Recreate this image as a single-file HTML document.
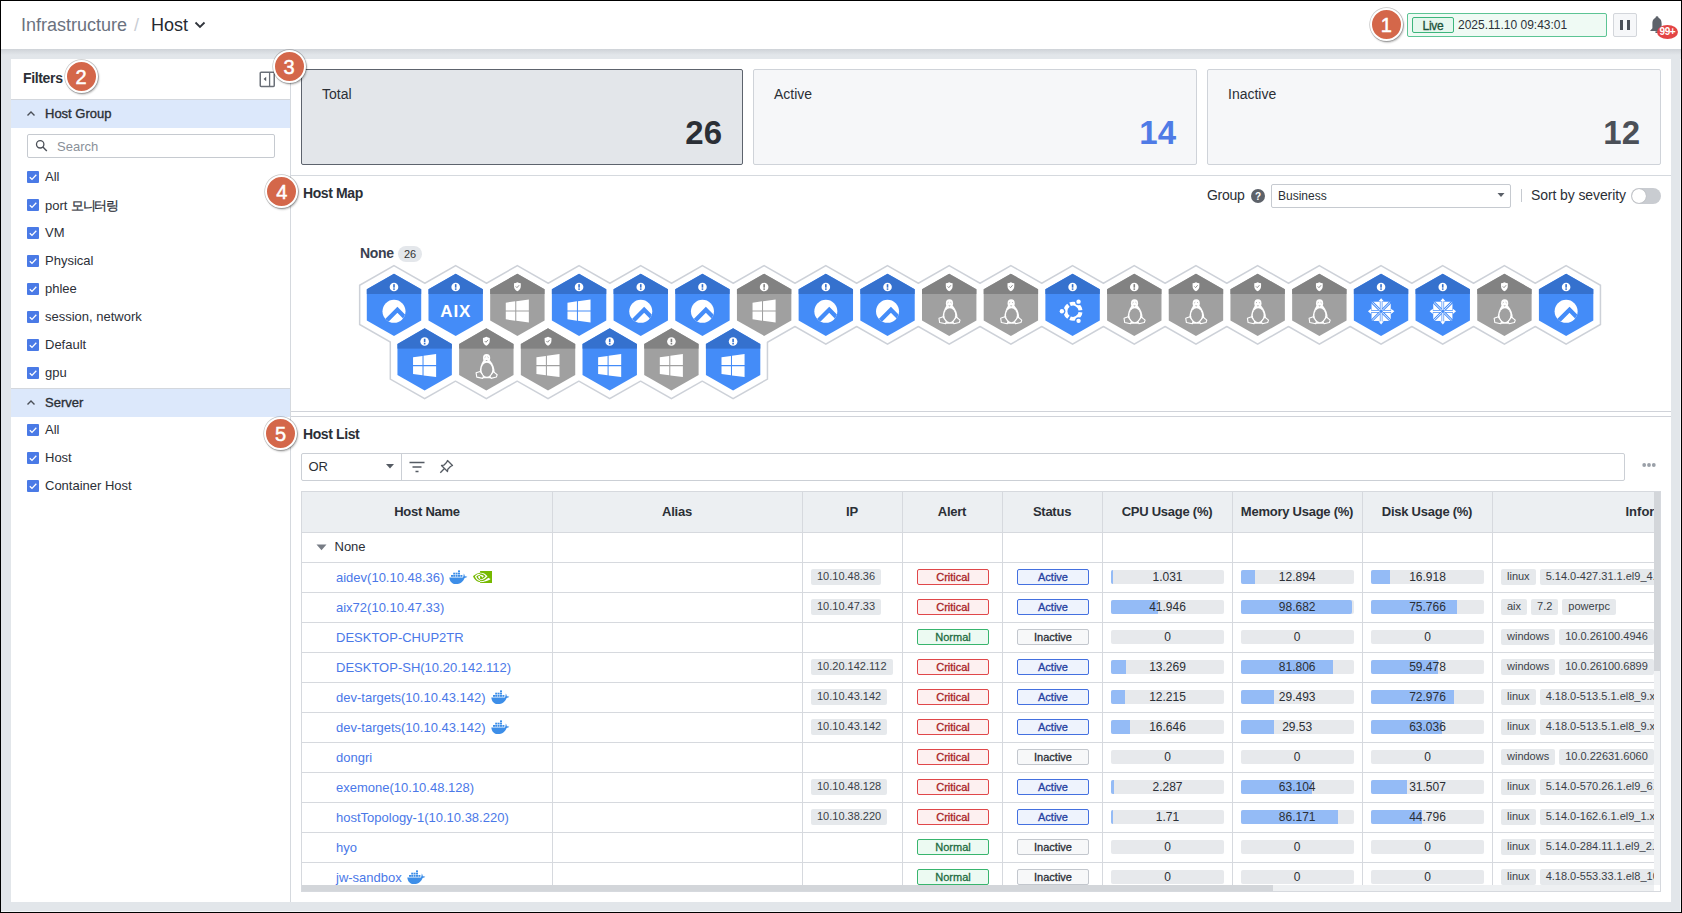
<!DOCTYPE html><html><head><meta charset="utf-8"><style>
*{box-sizing:border-box;margin:0;padding:0}
html,body{width:1682px;height:913px;overflow:hidden;background:#000;font-family:"Liberation Sans",sans-serif;color:#2b2f36}
.a{position:absolute}
.t{position:absolute;white-space:nowrap;line-height:1}
.cb{position:absolute;width:12px;height:12px;background:#4a7ae6;border-radius:1px}
.cb svg{position:absolute;left:0;top:0}
.lbl{position:absolute;left:45px;font-size:13px;color:#2c3038;white-space:nowrap;line-height:1}
.ann{position:absolute;width:33px;height:33px;border-radius:50%;background:#d4674a;border:2px solid #fff;box-shadow:0 0 0 0.7px rgba(0,0,0,.22),1px 1.5px 2px rgba(0,0,0,.3);color:#fff;font-size:20px;text-align:center;line-height:31px;z-index:50;-webkit-text-stroke:0.5px #fff}
.card{position:absolute;top:69px;height:96px;border:1px solid #cfd3d9;border-radius:2px;background:#f6f7f9}
.card .cl{position:absolute;left:20px;top:17.3px;font-size:14px;color:#2b2f36;line-height:1}
.card .cv{position:absolute;right:20px;top:45.5px;font-size:33px;font-weight:bold;line-height:1}
</style></head><body>
<div class="a" style="left:1px;top:1px;width:1680px;height:911px;background:#e2e6ea"></div>
<div class="a" style="left:1680px;top:1px;width:1px;height:911px;background:#f3f6f8"></div>
<div class="a" style="left:1px;top:911px;width:1680px;height:1px;background:#f3f6f8"></div>
<div class="a" style="left:1px;top:49px;width:1680px;height:10px;background:linear-gradient(#cfd3d8,#e2e6ea 60%)"></div>
<div class="a" style="left:1px;top:1px;width:1680px;height:48px;background:#fff"></div>
<div class="t" style="left:21px;top:16px;font-size:18px;color:#6b7280">Infrastructure</div>
<div class="t" style="left:134px;top:16px;font-size:18px;color:#c9cdd4">/</div>
<div class="t" style="left:151px;top:16px;font-size:18px;color:#262a31">Host</div>
<svg class="a" style="left:194px;top:20px" width="12" height="10"><path d="M1.5 2.5 L6 7 L10.5 2.5" fill="none" stroke="#30343b" stroke-width="1.8"/></svg>
<div class="a" style="left:1407px;top:13px;width:200px;height:24px;border:1px solid #5cc494;background:#effaf4;border-radius:2px"></div>
<div class="a" style="left:1412px;top:17px;width:42px;height:16px;border:1px solid #3db57c;background:#e6f7ee;border-radius:2px"></div>
<div class="t" style="left:1412px;top:19.6px;width:42px;text-align:center;font-size:12px;color:#1d5238;letter-spacing:-0.3px;-webkit-text-stroke:0.3px #1d5238">Live</div>
<div class="t" style="left:1458px;top:19px;font-size:12px;color:#2d3139">2025.11.10 09:43:01</div>
<div class="a" style="left:1613px;top:13px;width:24px;height:24px;border:1px solid #d3d6db;background:#f6f7f9;border-radius:2px"></div>
<div class="a" style="left:1620px;top:20px;width:3px;height:10px;background:#4a4f57"></div>
<div class="a" style="left:1627px;top:20px;width:3px;height:10px;background:#4a4f57"></div>
<svg class="a" style="left:1645px;top:14px" width="24" height="20" viewBox="1645 14 24 20"><circle cx="1657" cy="17.6" r="1.4" fill="#5d626a"/><path d="M1657 17.8 C1653.6 17.8 1652.4 20.5 1652.4 23.5 L1652.4 28.2 L1650 30.9 L1664 30.9 L1661.6 28.2 L1661.6 23.5 C1661.6 20.5 1660.4 17.8 1657 17.8Z" fill="#5d626a"/><rect x="1655.2" y="31.2" width="3.6" height="1.8" rx="0.9" fill="#5d626a"/></svg>
<div class="a" style="left:1656.8px;top:24.8px;width:21.2px;height:14.2px;border-radius:50%;background:#e34545"></div>
<div class="t" style="left:1656.8px;top:26.6px;width:21.2px;text-align:center;font-size:10px;font-weight:bold;color:#fff;letter-spacing:-0.4px">99+</div>
<div class="a" style="left:11px;top:59px;width:1660px;height:843px;background:#fff"></div>
<div class="a" style="left:290px;top:59px;width:1px;height:843px;background:#d5d9de"></div>
<div class="ann" style="left:1369.7px;top:7.5px">1</div>
<div class="ann" style="left:64.5px;top:59.5px">2</div>
<div class="ann" style="left:272.5px;top:49.5px">3</div>
<div class="ann" style="left:265.2px;top:175.2px">4</div>
<div class="ann" style="left:264.0px;top:416.8px">5</div>
<div class="t" style="left:23px;top:71.3px;font-size:14px;font-weight:bold;color:#2b2f36;letter-spacing:-0.35px">Filters</div>
<svg class="a" style="left:258px;top:69.5px" width="18" height="18" viewBox="0 0 18 18"><rect x="2.25" y="2.2" width="14" height="14.2" rx="0.9" fill="none" stroke="#6b7079" stroke-width="1.5"/><line x1="11.6" y1="2.5" x2="11.6" y2="16" stroke="#6b7079" stroke-width="1.3"/><path d="M8.2 6.8 L5.6 9 L8.2 11.2Z" fill="#555a62"/></svg>
<div class="a" style="left:11px;top:99px;width:279px;height:1px;background:#d3d7dd"></div>
<div class="a" style="left:11px;top:100px;width:279px;height:28px;background:#dce8fb"></div>
<svg class="a" style="left:26px;top:110px" width="10" height="7"><path d="M1.5 5.5 L5 2 L8.5 5.5" fill="none" stroke="#4a4f57" stroke-width="1.4"/></svg>
<div class="t" style="left:45px;top:107px;font-size:13px;color:#2b2f36;-webkit-text-stroke:0.35px #2b2f36">Host Group</div>
<div class="a" style="left:27px;top:134px;width:248px;height:24px;border:1px solid #c6cad0;border-radius:2px"></div>
<svg class="a" style="left:33px;top:137px" width="16" height="16" viewBox="33 137 16 16"><circle cx="40.2" cy="144.3" r="3.7" fill="none" stroke="#4b5058" stroke-width="1.3"/><line x1="42.9" y1="147" x2="46.8" y2="150.9" stroke="#4b5058" stroke-width="1.4"/></svg>
<div class="t" style="left:57px;top:140px;font-size:13px;color:#8a9099">Search</div>
<div class="cb" style="left:27px;top:171.0px"><svg width="12" height="12"><path d="M2.8 6.2 L5 8.4 L9.3 3.8" fill="none" stroke="#fff" stroke-width="1.3"/></svg></div>
<div class="lbl" style="top:170.0px">All</div>
<div class="cb" style="left:27px;top:199.0px"><svg width="12" height="12"><path d="M2.8 6.2 L5 8.4 L9.3 3.8" fill="none" stroke="#fff" stroke-width="1.3"/></svg></div>
<div class="lbl" style="top:199.0px">port <span style="letter-spacing:-1.4px;-webkit-text-stroke:0.25px #2c3038">모니터링</span></div>
<div class="cb" style="left:27px;top:227.0px"><svg width="12" height="12"><path d="M2.8 6.2 L5 8.4 L9.3 3.8" fill="none" stroke="#fff" stroke-width="1.3"/></svg></div>
<div class="lbl" style="top:226.0px">VM</div>
<div class="cb" style="left:27px;top:255.0px"><svg width="12" height="12"><path d="M2.8 6.2 L5 8.4 L9.3 3.8" fill="none" stroke="#fff" stroke-width="1.3"/></svg></div>
<div class="lbl" style="top:254.0px">Physical</div>
<div class="cb" style="left:27px;top:283.0px"><svg width="12" height="12"><path d="M2.8 6.2 L5 8.4 L9.3 3.8" fill="none" stroke="#fff" stroke-width="1.3"/></svg></div>
<div class="lbl" style="top:282.0px">phlee</div>
<div class="cb" style="left:27px;top:311.0px"><svg width="12" height="12"><path d="M2.8 6.2 L5 8.4 L9.3 3.8" fill="none" stroke="#fff" stroke-width="1.3"/></svg></div>
<div class="lbl" style="top:310.0px">session, network</div>
<div class="cb" style="left:27px;top:339.0px"><svg width="12" height="12"><path d="M2.8 6.2 L5 8.4 L9.3 3.8" fill="none" stroke="#fff" stroke-width="1.3"/></svg></div>
<div class="lbl" style="top:338.0px">Default</div>
<div class="cb" style="left:27px;top:367.0px"><svg width="12" height="12"><path d="M2.8 6.2 L5 8.4 L9.3 3.8" fill="none" stroke="#fff" stroke-width="1.3"/></svg></div>
<div class="lbl" style="top:366.0px">gpu</div>
<div class="a" style="left:11px;top:388px;width:279px;height:1px;background:#d3d7dd"></div>
<div class="a" style="left:11px;top:389px;width:279px;height:28px;background:#dce8fb"></div>
<svg class="a" style="left:26px;top:399px" width="10" height="7"><path d="M1.5 5.5 L5 2 L8.5 5.5" fill="none" stroke="#4a4f57" stroke-width="1.4"/></svg>
<div class="t" style="left:45px;top:396px;font-size:13px;color:#2b2f36;-webkit-text-stroke:0.35px #2b2f36">Server</div>
<div class="cb" style="left:27px;top:424.0px"><svg width="12" height="12"><path d="M2.8 6.2 L5 8.4 L9.3 3.8" fill="none" stroke="#fff" stroke-width="1.3"/></svg></div>
<div class="lbl" style="top:423.0px">All</div>
<div class="cb" style="left:27px;top:452.0px"><svg width="12" height="12"><path d="M2.8 6.2 L5 8.4 L9.3 3.8" fill="none" stroke="#fff" stroke-width="1.3"/></svg></div>
<div class="lbl" style="top:451.0px">Host</div>
<div class="cb" style="left:27px;top:480.0px"><svg width="12" height="12"><path d="M2.8 6.2 L5 8.4 L9.3 3.8" fill="none" stroke="#fff" stroke-width="1.3"/></svg></div>
<div class="lbl" style="top:479.0px">Container Host</div>
<div class="card" style="left:301px;width:442px;background:#e3e6ea;border-color:#5d636d"><div class="cl">Total</div><div class="cv" style="color:#2b2f36">26</div></div>
<div class="card" style="left:753px;width:444px;background:#f6f7f9;border-color:#cfd3d9"><div class="cl">Active</div><div class="cv" style="color:#4f7be6">14</div></div>
<div class="card" style="left:1207px;width:454px;background:#f6f7f9;border-color:#cfd3d9"><div class="cl">Inactive</div><div class="cv" style="color:#4b5058">12</div></div>
<div class="a" style="left:291px;top:175px;width:1380px;height:1px;background:#d5d9de"></div>
<div class="t" style="left:303px;top:185.7px;font-size:14px;font-weight:bold;color:#2b2f36;letter-spacing:-0.4px">Host Map</div>
<div class="t" style="left:1207px;top:188.4px;font-size:14px;color:#2b2f36;letter-spacing:-0.3px">Group</div>
<svg class="a" style="left:1251px;top:189px" width="14" height="14"><circle cx="7" cy="7" r="7" fill="#5d626a"/><text x="7" y="11" font-size="10" font-weight="bold" fill="#fff" text-anchor="middle" font-family="Liberation Sans">?</text></svg>
<div class="a" style="left:1271px;top:184px;width:240px;height:24px;border:1px solid #c6cad0;border-radius:2px"></div>
<div class="t" style="left:1278px;top:190px;font-size:12px;color:#2b2f36">Business</div>
<svg class="a" style="left:1496.5px;top:193px" width="8" height="5"><path d="M0.5 0 L7.5 0 L4 4Z" fill="#5b6068"/></svg>
<div class="a" style="left:1521px;top:189px;width:1px;height:13px;background:#c6cad0"></div>
<div class="t" style="left:1531px;top:188.3px;font-size:14px;color:#2b2f36;letter-spacing:-0.1px">Sort by severity</div>
<div class="a" style="left:1631px;top:188px;width:30px;height:16px;border-radius:8px;background:#c9ccd1"></div>
<div class="a" style="left:1632px;top:189px;width:14px;height:14px;border-radius:50%;background:#fff;box-shadow:0 0 1px rgba(0,0,0,.3)"></div>
<div class="t" style="left:360px;top:246.2px;font-size:14px;font-weight:bold;color:#3a4150;letter-spacing:-0.3px">None</div>
<div class="a" style="left:398px;top:246px;width:24px;height:16px;border-radius:8px;background:#e4e7eb"></div>
<div class="t" style="left:398px;top:249px;width:24px;text-align:center;font-size:11px;color:#333">26</div>
<div class="a" style="left:291px;top:411px;width:1380px;height:1px;background:#d0d3d9"></div>
<div class="a" style="left:291px;top:416px;width:1380px;height:1px;background:#d0d3d9"></div>
<svg class="a" style="left:291px;top:176px" width="1380" height="235" viewBox="0 0 1380 235"><defs><clipPath id="hx"><path d="M0.00,-31.10 L27.20,-15.55 L27.20,15.55 L0.00,31.10 L-27.20,15.55 L-27.20,-15.55Z"/></clipPath><clipPath id="rc"><circle cx="0" cy="6.5" r="11.5"/></clipPath></defs><g fill="#fff" stroke="#cdd1d8" stroke-width="3.0" stroke-linejoin="miter"><path d="M103.00,90.45 L136.60,109.65 L136.60,148.05 L103.00,167.25 L69.40,148.05 L69.40,109.65Z"/><path d="M164.69,90.45 L198.29,109.65 L198.29,148.05 L164.69,167.25 L131.09,148.05 L131.09,109.65Z"/><path d="M226.38,90.45 L259.98,109.65 L259.98,148.05 L226.38,167.25 L192.78,148.05 L192.78,109.65Z"/><path d="M288.07,90.45 L321.67,109.65 L321.67,148.05 L288.07,167.25 L254.47,148.05 L254.47,109.65Z"/><path d="M349.76,90.45 L383.36,109.65 L383.36,148.05 L349.76,167.25 L316.16,148.05 L316.16,109.65Z"/><path d="M411.45,90.45 L445.05,109.65 L445.05,148.05 L411.45,167.25 L377.85,148.05 L377.85,109.65Z"/><path d="M473.14,90.45 L506.74,109.65 L506.74,148.05 L473.14,167.25 L439.54,148.05 L439.54,109.65Z"/><path d="M534.83,90.45 L568.43,109.65 L568.43,148.05 L534.83,167.25 L501.23,148.05 L501.23,109.65Z"/><path d="M596.52,90.45 L630.12,109.65 L630.12,148.05 L596.52,167.25 L562.92,148.05 L562.92,109.65Z"/><path d="M658.21,90.45 L691.81,109.65 L691.81,148.05 L658.21,167.25 L624.61,148.05 L624.61,109.65Z"/><path d="M719.90,90.45 L753.50,109.65 L753.50,148.05 L719.90,167.25 L686.30,148.05 L686.30,109.65Z"/><path d="M781.59,90.45 L815.19,109.65 L815.19,148.05 L781.59,167.25 L747.99,148.05 L747.99,109.65Z"/><path d="M843.28,90.45 L876.88,109.65 L876.88,148.05 L843.28,167.25 L809.68,148.05 L809.68,109.65Z"/><path d="M904.97,90.45 L938.57,109.65 L938.57,148.05 L904.97,167.25 L871.37,148.05 L871.37,109.65Z"/><path d="M966.66,90.45 L1000.26,109.65 L1000.26,148.05 L966.66,167.25 L933.06,148.05 L933.06,109.65Z"/><path d="M1028.35,90.45 L1061.95,109.65 L1061.95,148.05 L1028.35,167.25 L994.75,148.05 L994.75,109.65Z"/><path d="M1090.04,90.45 L1123.64,109.65 L1123.64,148.05 L1090.04,167.25 L1056.44,148.05 L1056.44,109.65Z"/><path d="M1151.73,90.45 L1185.33,109.65 L1185.33,148.05 L1151.73,167.25 L1118.13,148.05 L1118.13,109.65Z"/><path d="M1213.42,90.45 L1247.02,109.65 L1247.02,148.05 L1213.42,167.25 L1179.82,148.05 L1179.82,109.65Z"/><path d="M1275.11,90.45 L1308.71,109.65 L1308.71,148.05 L1275.11,167.25 L1241.51,148.05 L1241.51,109.65Z"/><path d="M133.65,145.05 L167.25,164.25 L167.25,202.65 L133.65,221.85 L100.05,202.65 L100.05,164.25Z"/><path d="M195.34,145.05 L228.94,164.25 L228.94,202.65 L195.34,221.85 L161.74,202.65 L161.74,164.25Z"/><path d="M257.03,145.05 L290.63,164.25 L290.63,202.65 L257.03,221.85 L223.43,202.65 L223.43,164.25Z"/><path d="M318.72,145.05 L352.32,164.25 L352.32,202.65 L318.72,221.85 L285.12,202.65 L285.12,164.25Z"/><path d="M380.41,145.05 L414.01,164.25 L414.01,202.65 L380.41,221.85 L346.81,202.65 L346.81,164.25Z"/><path d="M442.10,145.05 L475.70,164.25 L475.70,202.65 L442.10,221.85 L408.50,202.65 L408.50,164.25Z"/></g><g fill="#fff"><path d="M103.00,90.45 L136.60,109.65 L136.60,148.05 L103.00,167.25 L69.40,148.05 L69.40,109.65Z"/><path d="M164.69,90.45 L198.29,109.65 L198.29,148.05 L164.69,167.25 L131.09,148.05 L131.09,109.65Z"/><path d="M226.38,90.45 L259.98,109.65 L259.98,148.05 L226.38,167.25 L192.78,148.05 L192.78,109.65Z"/><path d="M288.07,90.45 L321.67,109.65 L321.67,148.05 L288.07,167.25 L254.47,148.05 L254.47,109.65Z"/><path d="M349.76,90.45 L383.36,109.65 L383.36,148.05 L349.76,167.25 L316.16,148.05 L316.16,109.65Z"/><path d="M411.45,90.45 L445.05,109.65 L445.05,148.05 L411.45,167.25 L377.85,148.05 L377.85,109.65Z"/><path d="M473.14,90.45 L506.74,109.65 L506.74,148.05 L473.14,167.25 L439.54,148.05 L439.54,109.65Z"/><path d="M534.83,90.45 L568.43,109.65 L568.43,148.05 L534.83,167.25 L501.23,148.05 L501.23,109.65Z"/><path d="M596.52,90.45 L630.12,109.65 L630.12,148.05 L596.52,167.25 L562.92,148.05 L562.92,109.65Z"/><path d="M658.21,90.45 L691.81,109.65 L691.81,148.05 L658.21,167.25 L624.61,148.05 L624.61,109.65Z"/><path d="M719.90,90.45 L753.50,109.65 L753.50,148.05 L719.90,167.25 L686.30,148.05 L686.30,109.65Z"/><path d="M781.59,90.45 L815.19,109.65 L815.19,148.05 L781.59,167.25 L747.99,148.05 L747.99,109.65Z"/><path d="M843.28,90.45 L876.88,109.65 L876.88,148.05 L843.28,167.25 L809.68,148.05 L809.68,109.65Z"/><path d="M904.97,90.45 L938.57,109.65 L938.57,148.05 L904.97,167.25 L871.37,148.05 L871.37,109.65Z"/><path d="M966.66,90.45 L1000.26,109.65 L1000.26,148.05 L966.66,167.25 L933.06,148.05 L933.06,109.65Z"/><path d="M1028.35,90.45 L1061.95,109.65 L1061.95,148.05 L1028.35,167.25 L994.75,148.05 L994.75,109.65Z"/><path d="M1090.04,90.45 L1123.64,109.65 L1123.64,148.05 L1090.04,167.25 L1056.44,148.05 L1056.44,109.65Z"/><path d="M1151.73,90.45 L1185.33,109.65 L1185.33,148.05 L1151.73,167.25 L1118.13,148.05 L1118.13,109.65Z"/><path d="M1213.42,90.45 L1247.02,109.65 L1247.02,148.05 L1213.42,167.25 L1179.82,148.05 L1179.82,109.65Z"/><path d="M1275.11,90.45 L1308.71,109.65 L1308.71,148.05 L1275.11,167.25 L1241.51,148.05 L1241.51,109.65Z"/><path d="M133.65,145.05 L167.25,164.25 L167.25,202.65 L133.65,221.85 L100.05,202.65 L100.05,164.25Z"/><path d="M195.34,145.05 L228.94,164.25 L228.94,202.65 L195.34,221.85 L161.74,202.65 L161.74,164.25Z"/><path d="M257.03,145.05 L290.63,164.25 L290.63,202.65 L257.03,221.85 L223.43,202.65 L223.43,164.25Z"/><path d="M318.72,145.05 L352.32,164.25 L352.32,202.65 L318.72,221.85 L285.12,202.65 L285.12,164.25Z"/><path d="M380.41,145.05 L414.01,164.25 L414.01,202.65 L380.41,221.85 L346.81,202.65 L346.81,164.25Z"/><path d="M442.10,145.05 L475.70,164.25 L475.70,202.65 L442.10,221.85 L408.50,202.65 L408.50,164.25Z"/></g><g transform="translate(103.00,128.85)"><g clip-path="url(#hx)"><rect x="-30" y="-33" width="60" height="66" fill="#448cf8"/><rect x="-30" y="-33" width="60" height="22.15" fill="#3571ce"/></g><circle cx="0" cy="6.5" r="11.5" fill="#fff"/><g clip-path="url(#rc)"><path d="M-17.6,26 L3.4,5 L24.4,26" fill="none" stroke="#448cf8" stroke-width="4.3" stroke-linejoin="miter"/></g><circle cx="0" cy="-17.9" r="4.3" fill="#fff"/><rect x="-0.8" y="-20.7" width="1.6" height="3.5" fill="#3571ce"/><rect x="-0.8" y="-16.5" width="1.6" height="1.5" fill="#3571ce"/></g><g transform="translate(164.69,128.85)"><g clip-path="url(#hx)"><rect x="-30" y="-33" width="60" height="66" fill="#448cf8"/><rect x="-30" y="-33" width="60" height="22.15" fill="#3571ce"/></g><text x="0" y="11.9" font-family="Liberation Sans" font-weight="bold" font-size="17" fill="#fff" text-anchor="middle" letter-spacing="0.8">AIX</text><circle cx="0" cy="-17.9" r="4.3" fill="#fff"/><rect x="-0.8" y="-20.7" width="1.6" height="3.5" fill="#3571ce"/><rect x="-0.8" y="-16.5" width="1.6" height="1.5" fill="#3571ce"/></g><g transform="translate(226.38,128.85)"><g clip-path="url(#hx)"><rect x="-30" y="-33" width="60" height="66" fill="#a0a0a0"/><rect x="-30" y="-33" width="60" height="22.15" fill="#828282"/></g><g transform="translate(-11.6,-5.4) scale(0.0515)"><path d="M0 93.7l183.6-25.3v177.4H0V93.7zm0 324.6l183.6 25.3V268.4H0v149.9zm203.8 28L448 480V268.4H203.8v177.9zm0-380.6v180.1H448V32L203.8 65.7z" transform="translate(0,-32)" fill="#fff"/></g><path d="M0,-22.7 C1.2,-21.9 2.3,-21.6 3.4,-21.5 L3.4,-18.6 C3.4,-16.1 1.9,-14.5 0,-13.7 C-1.9,-14.5 -3.4,-16.1 -3.4,-18.6 L-3.4,-21.5 C-2.3,-21.6 -1.2,-21.9 0,-22.7Z" fill="#fff"/><path d="M-1.6,-18.4 L-0.4,-17.2 L1.7,-19.6" fill="none" stroke="#828282" stroke-width="0.9"/></g><g transform="translate(288.07,128.85)"><g clip-path="url(#hx)"><rect x="-30" y="-33" width="60" height="66" fill="#448cf8"/><rect x="-30" y="-33" width="60" height="22.15" fill="#3571ce"/></g><g transform="translate(-11.6,-5.4) scale(0.0515)"><path d="M0 93.7l183.6-25.3v177.4H0V93.7zm0 324.6l183.6 25.3V268.4H0v149.9zm203.8 28L448 480V268.4H203.8v177.9zm0-380.6v180.1H448V32L203.8 65.7z" transform="translate(0,-32)" fill="#fff"/></g><circle cx="0" cy="-17.9" r="4.3" fill="#fff"/><rect x="-0.8" y="-20.7" width="1.6" height="3.5" fill="#3571ce"/><rect x="-0.8" y="-16.5" width="1.6" height="1.5" fill="#3571ce"/></g><g transform="translate(349.76,128.85)"><g clip-path="url(#hx)"><rect x="-30" y="-33" width="60" height="66" fill="#448cf8"/><rect x="-30" y="-33" width="60" height="22.15" fill="#3571ce"/></g><circle cx="0" cy="6.5" r="11.5" fill="#fff"/><g clip-path="url(#rc)"><path d="M-17.6,26 L3.4,5 L24.4,26" fill="none" stroke="#448cf8" stroke-width="4.3" stroke-linejoin="miter"/></g><circle cx="0" cy="-17.9" r="4.3" fill="#fff"/><rect x="-0.8" y="-20.7" width="1.6" height="3.5" fill="#3571ce"/><rect x="-0.8" y="-16.5" width="1.6" height="1.5" fill="#3571ce"/></g><g transform="translate(411.45,128.85)"><g clip-path="url(#hx)"><rect x="-30" y="-33" width="60" height="66" fill="#448cf8"/><rect x="-30" y="-33" width="60" height="22.15" fill="#3571ce"/></g><circle cx="0" cy="6.5" r="11.5" fill="#fff"/><g clip-path="url(#rc)"><path d="M-17.6,26 L3.4,5 L24.4,26" fill="none" stroke="#448cf8" stroke-width="4.3" stroke-linejoin="miter"/></g><circle cx="0" cy="-17.9" r="4.3" fill="#fff"/><rect x="-0.8" y="-20.7" width="1.6" height="3.5" fill="#3571ce"/><rect x="-0.8" y="-16.5" width="1.6" height="1.5" fill="#3571ce"/></g><g transform="translate(473.14,128.85)"><g clip-path="url(#hx)"><rect x="-30" y="-33" width="60" height="66" fill="#a0a0a0"/><rect x="-30" y="-33" width="60" height="22.15" fill="#828282"/></g><g transform="translate(-11.6,-5.4) scale(0.0515)"><path d="M0 93.7l183.6-25.3v177.4H0V93.7zm0 324.6l183.6 25.3V268.4H0v149.9zm203.8 28L448 480V268.4H203.8v177.9zm0-380.6v180.1H448V32L203.8 65.7z" transform="translate(0,-32)" fill="#fff"/></g><circle cx="0" cy="-17.9" r="4.3" fill="#fff"/><rect x="-0.8" y="-20.7" width="1.6" height="3.5" fill="#828282"/><rect x="-0.8" y="-16.5" width="1.6" height="1.5" fill="#828282"/></g><g transform="translate(534.83,128.85)"><g clip-path="url(#hx)"><rect x="-30" y="-33" width="60" height="66" fill="#448cf8"/><rect x="-30" y="-33" width="60" height="22.15" fill="#3571ce"/></g><circle cx="0" cy="6.5" r="11.5" fill="#fff"/><g clip-path="url(#rc)"><path d="M-17.6,26 L3.4,5 L24.4,26" fill="none" stroke="#448cf8" stroke-width="4.3" stroke-linejoin="miter"/></g><circle cx="0" cy="-17.9" r="4.3" fill="#fff"/><rect x="-0.8" y="-20.7" width="1.6" height="3.5" fill="#3571ce"/><rect x="-0.8" y="-16.5" width="1.6" height="1.5" fill="#3571ce"/></g><g transform="translate(596.52,128.85)"><g clip-path="url(#hx)"><rect x="-30" y="-33" width="60" height="66" fill="#448cf8"/><rect x="-30" y="-33" width="60" height="22.15" fill="#3571ce"/></g><circle cx="0" cy="6.5" r="11.5" fill="#fff"/><g clip-path="url(#rc)"><path d="M-17.6,26 L3.4,5 L24.4,26" fill="none" stroke="#448cf8" stroke-width="4.3" stroke-linejoin="miter"/></g><circle cx="0" cy="-17.9" r="4.3" fill="#fff"/><rect x="-0.8" y="-20.7" width="1.6" height="3.5" fill="#3571ce"/><rect x="-0.8" y="-16.5" width="1.6" height="1.5" fill="#3571ce"/></g><g transform="translate(658.21,128.85)"><g clip-path="url(#hx)"><rect x="-30" y="-33" width="60" height="66" fill="#a0a0a0"/><rect x="-30" y="-33" width="60" height="22.15" fill="#828282"/></g><g transform="translate(0.25,0)"><path d="M-3.2,0.8 C-5.6,4.5 -7,9 -6.8,13.5 L-3.5,18.8 L3.5,18.8 L8.0,13.5 C8.2,9 6.6,4.5 3.4,0.8Z" fill="#fff"/><ellipse cx="0.3" cy="10.3" rx="5.4" ry="7.0" fill="#a0a0a0"/><ellipse cx="0" cy="-1.4" rx="3.6" ry="4.1" fill="#fff"/><path d="M-1.9,-1.9 L-1.0,-2.6 M1.0,-2.6 L1.9,-1.9" stroke="#a0a0a0" stroke-width="0.8"/><path d="M-1.3,0.6 L1.3,0.6 L0,1.6Z" fill="#a0a0a0"/><path d="M-10.5,13.4 L-6.4,12 L-3.2,16.6 L-3.9,18.9 L-9.8,17.7Z" fill="#a0a0a0" stroke="#fff" stroke-width="1.1" stroke-linejoin="round"/><path d="M10.6,15.3 L6.8,12.2 L3.4,16.8 L4.4,18.9 L9.8,17.6Z" fill="#a0a0a0" stroke="#fff" stroke-width="1.1" stroke-linejoin="round"/></g><path d="M0,-22.7 C1.2,-21.9 2.3,-21.6 3.4,-21.5 L3.4,-18.6 C3.4,-16.1 1.9,-14.5 0,-13.7 C-1.9,-14.5 -3.4,-16.1 -3.4,-18.6 L-3.4,-21.5 C-2.3,-21.6 -1.2,-21.9 0,-22.7Z" fill="#fff"/><path d="M-1.6,-18.4 L-0.4,-17.2 L1.7,-19.6" fill="none" stroke="#828282" stroke-width="0.9"/></g><g transform="translate(719.90,128.85)"><g clip-path="url(#hx)"><rect x="-30" y="-33" width="60" height="66" fill="#a0a0a0"/><rect x="-30" y="-33" width="60" height="22.15" fill="#828282"/></g><g transform="translate(0.25,0)"><path d="M-3.2,0.8 C-5.6,4.5 -7,9 -6.8,13.5 L-3.5,18.8 L3.5,18.8 L8.0,13.5 C8.2,9 6.6,4.5 3.4,0.8Z" fill="#fff"/><ellipse cx="0.3" cy="10.3" rx="5.4" ry="7.0" fill="#a0a0a0"/><ellipse cx="0" cy="-1.4" rx="3.6" ry="4.1" fill="#fff"/><path d="M-1.9,-1.9 L-1.0,-2.6 M1.0,-2.6 L1.9,-1.9" stroke="#a0a0a0" stroke-width="0.8"/><path d="M-1.3,0.6 L1.3,0.6 L0,1.6Z" fill="#a0a0a0"/><path d="M-10.5,13.4 L-6.4,12 L-3.2,16.6 L-3.9,18.9 L-9.8,17.7Z" fill="#a0a0a0" stroke="#fff" stroke-width="1.1" stroke-linejoin="round"/><path d="M10.6,15.3 L6.8,12.2 L3.4,16.8 L4.4,18.9 L9.8,17.6Z" fill="#a0a0a0" stroke="#fff" stroke-width="1.1" stroke-linejoin="round"/></g><path d="M0,-22.7 C1.2,-21.9 2.3,-21.6 3.4,-21.5 L3.4,-18.6 C3.4,-16.1 1.9,-14.5 0,-13.7 C-1.9,-14.5 -3.4,-16.1 -3.4,-18.6 L-3.4,-21.5 C-2.3,-21.6 -1.2,-21.9 0,-22.7Z" fill="#fff"/><path d="M-1.6,-18.4 L-0.4,-17.2 L1.7,-19.6" fill="none" stroke="#828282" stroke-width="0.9"/></g><g transform="translate(781.59,128.85)"><g clip-path="url(#hx)"><rect x="-30" y="-33" width="60" height="66" fill="#448cf8"/><rect x="-30" y="-33" width="60" height="22.15" fill="#3571ce"/></g><g transform="translate(0.4,6.4)"><path d="M7.49,0.92 A7.55,7.55 0 0 1 -2.95,6.95" fill="none" stroke="#fff" stroke-width="3.9"/><path d="M-4.54,6.03 A7.55,7.55 0 0 1 -4.54,-6.03" fill="none" stroke="#fff" stroke-width="3.9"/><path d="M-2.95,-6.95 A7.55,7.55 0 0 1 7.49,-0.92" fill="none" stroke="#fff" stroke-width="3.9"/><circle cx="-11.10" cy="0.00" r="3.5" fill="#448cf8"/><circle cx="-11.10" cy="0.00" r="2.2" fill="#fff"/><circle cx="5.55" cy="-9.61" r="3.5" fill="#448cf8"/><circle cx="5.55" cy="-9.61" r="2.2" fill="#fff"/><circle cx="5.55" cy="9.61" r="3.5" fill="#448cf8"/><circle cx="5.55" cy="9.61" r="2.2" fill="#fff"/></g><circle cx="0" cy="-17.9" r="4.3" fill="#fff"/><rect x="-0.8" y="-20.7" width="1.6" height="3.5" fill="#3571ce"/><rect x="-0.8" y="-16.5" width="1.6" height="1.5" fill="#3571ce"/></g><g transform="translate(843.28,128.85)"><g clip-path="url(#hx)"><rect x="-30" y="-33" width="60" height="66" fill="#a0a0a0"/><rect x="-30" y="-33" width="60" height="22.15" fill="#828282"/></g><g transform="translate(0.25,0)"><path d="M-3.2,0.8 C-5.6,4.5 -7,9 -6.8,13.5 L-3.5,18.8 L3.5,18.8 L8.0,13.5 C8.2,9 6.6,4.5 3.4,0.8Z" fill="#fff"/><ellipse cx="0.3" cy="10.3" rx="5.4" ry="7.0" fill="#a0a0a0"/><ellipse cx="0" cy="-1.4" rx="3.6" ry="4.1" fill="#fff"/><path d="M-1.9,-1.9 L-1.0,-2.6 M1.0,-2.6 L1.9,-1.9" stroke="#a0a0a0" stroke-width="0.8"/><path d="M-1.3,0.6 L1.3,0.6 L0,1.6Z" fill="#a0a0a0"/><path d="M-10.5,13.4 L-6.4,12 L-3.2,16.6 L-3.9,18.9 L-9.8,17.7Z" fill="#a0a0a0" stroke="#fff" stroke-width="1.1" stroke-linejoin="round"/><path d="M10.6,15.3 L6.8,12.2 L3.4,16.8 L4.4,18.9 L9.8,17.6Z" fill="#a0a0a0" stroke="#fff" stroke-width="1.1" stroke-linejoin="round"/></g><circle cx="0" cy="-17.9" r="4.3" fill="#fff"/><rect x="-0.8" y="-20.7" width="1.6" height="3.5" fill="#828282"/><rect x="-0.8" y="-16.5" width="1.6" height="1.5" fill="#828282"/></g><g transform="translate(904.97,128.85)"><g clip-path="url(#hx)"><rect x="-30" y="-33" width="60" height="66" fill="#a0a0a0"/><rect x="-30" y="-33" width="60" height="22.15" fill="#828282"/></g><g transform="translate(0.25,0)"><path d="M-3.2,0.8 C-5.6,4.5 -7,9 -6.8,13.5 L-3.5,18.8 L3.5,18.8 L8.0,13.5 C8.2,9 6.6,4.5 3.4,0.8Z" fill="#fff"/><ellipse cx="0.3" cy="10.3" rx="5.4" ry="7.0" fill="#a0a0a0"/><ellipse cx="0" cy="-1.4" rx="3.6" ry="4.1" fill="#fff"/><path d="M-1.9,-1.9 L-1.0,-2.6 M1.0,-2.6 L1.9,-1.9" stroke="#a0a0a0" stroke-width="0.8"/><path d="M-1.3,0.6 L1.3,0.6 L0,1.6Z" fill="#a0a0a0"/><path d="M-10.5,13.4 L-6.4,12 L-3.2,16.6 L-3.9,18.9 L-9.8,17.7Z" fill="#a0a0a0" stroke="#fff" stroke-width="1.1" stroke-linejoin="round"/><path d="M10.6,15.3 L6.8,12.2 L3.4,16.8 L4.4,18.9 L9.8,17.6Z" fill="#a0a0a0" stroke="#fff" stroke-width="1.1" stroke-linejoin="round"/></g><path d="M0,-22.7 C1.2,-21.9 2.3,-21.6 3.4,-21.5 L3.4,-18.6 C3.4,-16.1 1.9,-14.5 0,-13.7 C-1.9,-14.5 -3.4,-16.1 -3.4,-18.6 L-3.4,-21.5 C-2.3,-21.6 -1.2,-21.9 0,-22.7Z" fill="#fff"/><path d="M-1.6,-18.4 L-0.4,-17.2 L1.7,-19.6" fill="none" stroke="#828282" stroke-width="0.9"/></g><g transform="translate(966.66,128.85)"><g clip-path="url(#hx)"><rect x="-30" y="-33" width="60" height="66" fill="#a0a0a0"/><rect x="-30" y="-33" width="60" height="22.15" fill="#828282"/></g><g transform="translate(0.25,0)"><path d="M-3.2,0.8 C-5.6,4.5 -7,9 -6.8,13.5 L-3.5,18.8 L3.5,18.8 L8.0,13.5 C8.2,9 6.6,4.5 3.4,0.8Z" fill="#fff"/><ellipse cx="0.3" cy="10.3" rx="5.4" ry="7.0" fill="#a0a0a0"/><ellipse cx="0" cy="-1.4" rx="3.6" ry="4.1" fill="#fff"/><path d="M-1.9,-1.9 L-1.0,-2.6 M1.0,-2.6 L1.9,-1.9" stroke="#a0a0a0" stroke-width="0.8"/><path d="M-1.3,0.6 L1.3,0.6 L0,1.6Z" fill="#a0a0a0"/><path d="M-10.5,13.4 L-6.4,12 L-3.2,16.6 L-3.9,18.9 L-9.8,17.7Z" fill="#a0a0a0" stroke="#fff" stroke-width="1.1" stroke-linejoin="round"/><path d="M10.6,15.3 L6.8,12.2 L3.4,16.8 L4.4,18.9 L9.8,17.6Z" fill="#a0a0a0" stroke="#fff" stroke-width="1.1" stroke-linejoin="round"/></g><path d="M0,-22.7 C1.2,-21.9 2.3,-21.6 3.4,-21.5 L3.4,-18.6 C3.4,-16.1 1.9,-14.5 0,-13.7 C-1.9,-14.5 -3.4,-16.1 -3.4,-18.6 L-3.4,-21.5 C-2.3,-21.6 -1.2,-21.9 0,-22.7Z" fill="#fff"/><path d="M-1.6,-18.4 L-0.4,-17.2 L1.7,-19.6" fill="none" stroke="#828282" stroke-width="0.9"/></g><g transform="translate(1028.35,128.85)"><g clip-path="url(#hx)"><rect x="-30" y="-33" width="60" height="66" fill="#a0a0a0"/><rect x="-30" y="-33" width="60" height="22.15" fill="#828282"/></g><g transform="translate(0.25,0)"><path d="M-3.2,0.8 C-5.6,4.5 -7,9 -6.8,13.5 L-3.5,18.8 L3.5,18.8 L8.0,13.5 C8.2,9 6.6,4.5 3.4,0.8Z" fill="#fff"/><ellipse cx="0.3" cy="10.3" rx="5.4" ry="7.0" fill="#a0a0a0"/><ellipse cx="0" cy="-1.4" rx="3.6" ry="4.1" fill="#fff"/><path d="M-1.9,-1.9 L-1.0,-2.6 M1.0,-2.6 L1.9,-1.9" stroke="#a0a0a0" stroke-width="0.8"/><path d="M-1.3,0.6 L1.3,0.6 L0,1.6Z" fill="#a0a0a0"/><path d="M-10.5,13.4 L-6.4,12 L-3.2,16.6 L-3.9,18.9 L-9.8,17.7Z" fill="#a0a0a0" stroke="#fff" stroke-width="1.1" stroke-linejoin="round"/><path d="M10.6,15.3 L6.8,12.2 L3.4,16.8 L4.4,18.9 L9.8,17.6Z" fill="#a0a0a0" stroke="#fff" stroke-width="1.1" stroke-linejoin="round"/></g><path d="M0,-22.7 C1.2,-21.9 2.3,-21.6 3.4,-21.5 L3.4,-18.6 C3.4,-16.1 1.9,-14.5 0,-13.7 C-1.9,-14.5 -3.4,-16.1 -3.4,-18.6 L-3.4,-21.5 C-2.3,-21.6 -1.2,-21.9 0,-22.7Z" fill="#fff"/><path d="M-1.6,-18.4 L-0.4,-17.2 L1.7,-19.6" fill="none" stroke="#828282" stroke-width="0.9"/></g><g transform="translate(1090.04,128.85)"><g clip-path="url(#hx)"><rect x="-30" y="-33" width="60" height="66" fill="#448cf8"/><rect x="-30" y="-33" width="60" height="22.15" fill="#3571ce"/></g><g transform="translate(0.1,6.5)"><rect x="-9.6" y="-9.6" width="19.2" height="19.2" fill="#fff"/><path d="M0,-12 L0,12 M-12,0 L12,0" stroke="#448cf8" stroke-width="2.6"/><path d="M-9.6,-9.6 L9.6,9.6 M-9.6,9.6 L9.6,-9.6" stroke="#448cf8" stroke-width="2.6"/><path d="M0,-11 L0,11 M-11,0 L11,0" stroke="#fff" stroke-width="1.2"/><path d="M-8.8,-8.8 L8.8,8.8 M-8.8,8.8 L8.8,-8.8" stroke="#fff" stroke-width="0.9"/><path d="M-3,-5.5 L-5.5,-3 L-5.5,-8 Z M3,-5.5 L5.5,-3 L5.5,-8Z M-3,5.5 L-5.5,3 L-5.5,8Z M3,5.5 L5.5,3 L5.5,8Z" fill="#448cf8" opacity="0.0"/><path d="M0,-13.2 L-2.6,-10 L2.6,-10Z M0,13.2 L-2.6,10 L2.6,10Z M-13.2,0 L-10,-2.6 L-10,2.6Z M13.2,0 L10,-2.6 L10,2.6Z" fill="#fff"/><circle cx="0" cy="0" r="1.6" fill="#448cf8"/></g><circle cx="0" cy="-17.9" r="4.3" fill="#fff"/><rect x="-0.8" y="-20.7" width="1.6" height="3.5" fill="#3571ce"/><rect x="-0.8" y="-16.5" width="1.6" height="1.5" fill="#3571ce"/></g><g transform="translate(1151.73,128.85)"><g clip-path="url(#hx)"><rect x="-30" y="-33" width="60" height="66" fill="#448cf8"/><rect x="-30" y="-33" width="60" height="22.15" fill="#3571ce"/></g><g transform="translate(0.1,6.5)"><rect x="-9.6" y="-9.6" width="19.2" height="19.2" fill="#fff"/><path d="M0,-12 L0,12 M-12,0 L12,0" stroke="#448cf8" stroke-width="2.6"/><path d="M-9.6,-9.6 L9.6,9.6 M-9.6,9.6 L9.6,-9.6" stroke="#448cf8" stroke-width="2.6"/><path d="M0,-11 L0,11 M-11,0 L11,0" stroke="#fff" stroke-width="1.2"/><path d="M-8.8,-8.8 L8.8,8.8 M-8.8,8.8 L8.8,-8.8" stroke="#fff" stroke-width="0.9"/><path d="M-3,-5.5 L-5.5,-3 L-5.5,-8 Z M3,-5.5 L5.5,-3 L5.5,-8Z M-3,5.5 L-5.5,3 L-5.5,8Z M3,5.5 L5.5,3 L5.5,8Z" fill="#448cf8" opacity="0.0"/><path d="M0,-13.2 L-2.6,-10 L2.6,-10Z M0,13.2 L-2.6,10 L2.6,10Z M-13.2,0 L-10,-2.6 L-10,2.6Z M13.2,0 L10,-2.6 L10,2.6Z" fill="#fff"/><circle cx="0" cy="0" r="1.6" fill="#448cf8"/></g><circle cx="0" cy="-17.9" r="4.3" fill="#fff"/><rect x="-0.8" y="-20.7" width="1.6" height="3.5" fill="#3571ce"/><rect x="-0.8" y="-16.5" width="1.6" height="1.5" fill="#3571ce"/></g><g transform="translate(1213.42,128.85)"><g clip-path="url(#hx)"><rect x="-30" y="-33" width="60" height="66" fill="#a0a0a0"/><rect x="-30" y="-33" width="60" height="22.15" fill="#828282"/></g><g transform="translate(0.25,0)"><path d="M-3.2,0.8 C-5.6,4.5 -7,9 -6.8,13.5 L-3.5,18.8 L3.5,18.8 L8.0,13.5 C8.2,9 6.6,4.5 3.4,0.8Z" fill="#fff"/><ellipse cx="0.3" cy="10.3" rx="5.4" ry="7.0" fill="#a0a0a0"/><ellipse cx="0" cy="-1.4" rx="3.6" ry="4.1" fill="#fff"/><path d="M-1.9,-1.9 L-1.0,-2.6 M1.0,-2.6 L1.9,-1.9" stroke="#a0a0a0" stroke-width="0.8"/><path d="M-1.3,0.6 L1.3,0.6 L0,1.6Z" fill="#a0a0a0"/><path d="M-10.5,13.4 L-6.4,12 L-3.2,16.6 L-3.9,18.9 L-9.8,17.7Z" fill="#a0a0a0" stroke="#fff" stroke-width="1.1" stroke-linejoin="round"/><path d="M10.6,15.3 L6.8,12.2 L3.4,16.8 L4.4,18.9 L9.8,17.6Z" fill="#a0a0a0" stroke="#fff" stroke-width="1.1" stroke-linejoin="round"/></g><path d="M0,-22.7 C1.2,-21.9 2.3,-21.6 3.4,-21.5 L3.4,-18.6 C3.4,-16.1 1.9,-14.5 0,-13.7 C-1.9,-14.5 -3.4,-16.1 -3.4,-18.6 L-3.4,-21.5 C-2.3,-21.6 -1.2,-21.9 0,-22.7Z" fill="#fff"/><path d="M-1.6,-18.4 L-0.4,-17.2 L1.7,-19.6" fill="none" stroke="#828282" stroke-width="0.9"/></g><g transform="translate(1275.11,128.85)"><g clip-path="url(#hx)"><rect x="-30" y="-33" width="60" height="66" fill="#448cf8"/><rect x="-30" y="-33" width="60" height="22.15" fill="#3571ce"/></g><circle cx="0" cy="6.5" r="11.5" fill="#fff"/><g clip-path="url(#rc)"><path d="M-17.6,26 L3.4,5 L24.4,26" fill="none" stroke="#448cf8" stroke-width="4.3" stroke-linejoin="miter"/></g><circle cx="0" cy="-17.9" r="4.3" fill="#fff"/><rect x="-0.8" y="-20.7" width="1.6" height="3.5" fill="#3571ce"/><rect x="-0.8" y="-16.5" width="1.6" height="1.5" fill="#3571ce"/></g><g transform="translate(133.65,183.45)"><g clip-path="url(#hx)"><rect x="-30" y="-33" width="60" height="66" fill="#448cf8"/><rect x="-30" y="-33" width="60" height="22.15" fill="#3571ce"/></g><g transform="translate(-11.6,-5.4) scale(0.0515)"><path d="M0 93.7l183.6-25.3v177.4H0V93.7zm0 324.6l183.6 25.3V268.4H0v149.9zm203.8 28L448 480V268.4H203.8v177.9zm0-380.6v180.1H448V32L203.8 65.7z" transform="translate(0,-32)" fill="#fff"/></g><circle cx="0" cy="-17.9" r="4.3" fill="#fff"/><rect x="-0.8" y="-20.7" width="1.6" height="3.5" fill="#3571ce"/><rect x="-0.8" y="-16.5" width="1.6" height="1.5" fill="#3571ce"/></g><g transform="translate(195.34,183.45)"><g clip-path="url(#hx)"><rect x="-30" y="-33" width="60" height="66" fill="#a0a0a0"/><rect x="-30" y="-33" width="60" height="22.15" fill="#828282"/></g><g transform="translate(0.25,0)"><path d="M-3.2,0.8 C-5.6,4.5 -7,9 -6.8,13.5 L-3.5,18.8 L3.5,18.8 L8.0,13.5 C8.2,9 6.6,4.5 3.4,0.8Z" fill="#fff"/><ellipse cx="0.3" cy="10.3" rx="5.4" ry="7.0" fill="#a0a0a0"/><ellipse cx="0" cy="-1.4" rx="3.6" ry="4.1" fill="#fff"/><path d="M-1.9,-1.9 L-1.0,-2.6 M1.0,-2.6 L1.9,-1.9" stroke="#a0a0a0" stroke-width="0.8"/><path d="M-1.3,0.6 L1.3,0.6 L0,1.6Z" fill="#a0a0a0"/><path d="M-10.5,13.4 L-6.4,12 L-3.2,16.6 L-3.9,18.9 L-9.8,17.7Z" fill="#a0a0a0" stroke="#fff" stroke-width="1.1" stroke-linejoin="round"/><path d="M10.6,15.3 L6.8,12.2 L3.4,16.8 L4.4,18.9 L9.8,17.6Z" fill="#a0a0a0" stroke="#fff" stroke-width="1.1" stroke-linejoin="round"/></g><path d="M0,-22.7 C1.2,-21.9 2.3,-21.6 3.4,-21.5 L3.4,-18.6 C3.4,-16.1 1.9,-14.5 0,-13.7 C-1.9,-14.5 -3.4,-16.1 -3.4,-18.6 L-3.4,-21.5 C-2.3,-21.6 -1.2,-21.9 0,-22.7Z" fill="#fff"/><path d="M-1.6,-18.4 L-0.4,-17.2 L1.7,-19.6" fill="none" stroke="#828282" stroke-width="0.9"/></g><g transform="translate(257.03,183.45)"><g clip-path="url(#hx)"><rect x="-30" y="-33" width="60" height="66" fill="#a0a0a0"/><rect x="-30" y="-33" width="60" height="22.15" fill="#828282"/></g><g transform="translate(-11.6,-5.4) scale(0.0515)"><path d="M0 93.7l183.6-25.3v177.4H0V93.7zm0 324.6l183.6 25.3V268.4H0v149.9zm203.8 28L448 480V268.4H203.8v177.9zm0-380.6v180.1H448V32L203.8 65.7z" transform="translate(0,-32)" fill="#fff"/></g><path d="M0,-22.7 C1.2,-21.9 2.3,-21.6 3.4,-21.5 L3.4,-18.6 C3.4,-16.1 1.9,-14.5 0,-13.7 C-1.9,-14.5 -3.4,-16.1 -3.4,-18.6 L-3.4,-21.5 C-2.3,-21.6 -1.2,-21.9 0,-22.7Z" fill="#fff"/><path d="M-1.6,-18.4 L-0.4,-17.2 L1.7,-19.6" fill="none" stroke="#828282" stroke-width="0.9"/></g><g transform="translate(318.72,183.45)"><g clip-path="url(#hx)"><rect x="-30" y="-33" width="60" height="66" fill="#448cf8"/><rect x="-30" y="-33" width="60" height="22.15" fill="#3571ce"/></g><g transform="translate(-11.6,-5.4) scale(0.0515)"><path d="M0 93.7l183.6-25.3v177.4H0V93.7zm0 324.6l183.6 25.3V268.4H0v149.9zm203.8 28L448 480V268.4H203.8v177.9zm0-380.6v180.1H448V32L203.8 65.7z" transform="translate(0,-32)" fill="#fff"/></g><circle cx="0" cy="-17.9" r="4.3" fill="#fff"/><rect x="-0.8" y="-20.7" width="1.6" height="3.5" fill="#3571ce"/><rect x="-0.8" y="-16.5" width="1.6" height="1.5" fill="#3571ce"/></g><g transform="translate(380.41,183.45)"><g clip-path="url(#hx)"><rect x="-30" y="-33" width="60" height="66" fill="#a0a0a0"/><rect x="-30" y="-33" width="60" height="22.15" fill="#828282"/></g><g transform="translate(-11.6,-5.4) scale(0.0515)"><path d="M0 93.7l183.6-25.3v177.4H0V93.7zm0 324.6l183.6 25.3V268.4H0v149.9zm203.8 28L448 480V268.4H203.8v177.9zm0-380.6v180.1H448V32L203.8 65.7z" transform="translate(0,-32)" fill="#fff"/></g><circle cx="0" cy="-17.9" r="4.3" fill="#fff"/><rect x="-0.8" y="-20.7" width="1.6" height="3.5" fill="#828282"/><rect x="-0.8" y="-16.5" width="1.6" height="1.5" fill="#828282"/></g><g transform="translate(442.10,183.45)"><g clip-path="url(#hx)"><rect x="-30" y="-33" width="60" height="66" fill="#448cf8"/><rect x="-30" y="-33" width="60" height="22.15" fill="#3571ce"/></g><g transform="translate(-11.6,-5.4) scale(0.0515)"><path d="M0 93.7l183.6-25.3v177.4H0V93.7zm0 324.6l183.6 25.3V268.4H0v149.9zm203.8 28L448 480V268.4H203.8v177.9zm0-380.6v180.1H448V32L203.8 65.7z" transform="translate(0,-32)" fill="#fff"/></g><circle cx="0" cy="-17.9" r="4.3" fill="#fff"/><rect x="-0.8" y="-20.7" width="1.6" height="3.5" fill="#3571ce"/><rect x="-0.8" y="-16.5" width="1.6" height="1.5" fill="#3571ce"/></g></svg>
<div class="t" style="left:303.0px;top:427.15px;font-size:14px;color:#2b2f36;font-weight:bold;letter-spacing:-0.4px;">Host List</div>
<div class="a" style="left:301px;top:453px;width:1324px;height:28px;border:1px solid #cbcfd5;border-radius:2px"></div>
<div class="a" style="left:401px;top:454px;width:1px;height:26px;background:#cbcfd5"></div>
<div class="t" style="left:308.5px;top:460.00px;font-size:13px;color:#2b2f36;">OR</div>
<svg class="a" style="left:386px;top:464px" width="8" height="5"><path d="M0 0 L8 0 L4 4.5Z" fill="#555b63"/></svg>
<svg class="a" style="left:408px;top:459px" width="18" height="16"><path d="M1.5 3.5 H16.5 M4.5 8 H13.5 M7.5 12.5 H10.5" stroke="#555b63" stroke-width="1.6"/></svg>
<svg class="a" style="left:438px;top:458px" width="17" height="17" viewBox="0 0 17 17"><path d="M9.5 2.5 L14.5 7.5 L12.5 8.5 L9.8 11.2 L9.5 13.5 L3.5 7.5 L5.8 7.2 L8.5 4.5Z" fill="none" stroke="#555b63" stroke-width="1.3" stroke-linejoin="round"/><path d="M6.2 10.8 L2.3 14.7" stroke="#555b63" stroke-width="1.3"/></svg>
<svg class="a" style="left:1642px;top:462px" width="14" height="6"><circle cx="2.2" cy="3" r="1.9" fill="#9aa0a8"/><circle cx="7" cy="3" r="1.9" fill="#9aa0a8"/><circle cx="11.8" cy="3" r="1.9" fill="#9aa0a8"/></svg>
<div class="a" style="left:301px;top:491px;width:1360px;height:401px;border:1px solid #d6d9de;overflow:hidden">
<div class="a" style="left:0.0px;top:0.0px;width:1400.0px;height:40.0px;background:#eceff2"></div>
<div class="a" style="left:0.0px;top:40.0px;width:1400.0px;height:1.0px;background:#d6d9de"></div>
<div class="a" style="left:250.0px;top:0.0px;width:1.0px;height:400.0px;background:#d6d9de"></div>
<div class="a" style="left:500.0px;top:0.0px;width:1.0px;height:400.0px;background:#d6d9de"></div>
<div class="a" style="left:600.0px;top:0.0px;width:1.0px;height:400.0px;background:#d6d9de"></div>
<div class="a" style="left:700.0px;top:0.0px;width:1.0px;height:400.0px;background:#d6d9de"></div>
<div class="a" style="left:800.0px;top:0.0px;width:1.0px;height:400.0px;background:#d6d9de"></div>
<div class="a" style="left:930.0px;top:0.0px;width:1.0px;height:400.0px;background:#d6d9de"></div>
<div class="a" style="left:1060.0px;top:0.0px;width:1.0px;height:400.0px;background:#d6d9de"></div>
<div class="a" style="left:1190.0px;top:0.0px;width:1.0px;height:400.0px;background:#d6d9de"></div>
<div class="t" style="left:0.0px;top:13.30px;font-size:13px;color:#2b2f36;font-weight:bold;width:250px;text-align:center;letter-spacing:-0.25px;">Host Name</div>
<div class="t" style="left:250.0px;top:13.30px;font-size:13px;color:#2b2f36;font-weight:bold;width:250px;text-align:center;letter-spacing:-0.25px;">Alias</div>
<div class="t" style="left:500.0px;top:13.30px;font-size:13px;color:#2b2f36;font-weight:bold;width:100px;text-align:center;letter-spacing:-0.25px;">IP</div>
<div class="t" style="left:600.0px;top:13.30px;font-size:13px;color:#2b2f36;font-weight:bold;width:100px;text-align:center;letter-spacing:-0.25px;">Alert</div>
<div class="t" style="left:700.0px;top:13.30px;font-size:13px;color:#2b2f36;font-weight:bold;width:100px;text-align:center;letter-spacing:-0.25px;">Status</div>
<div class="t" style="left:800.0px;top:13.30px;font-size:13px;color:#2b2f36;font-weight:bold;width:130px;text-align:center;letter-spacing:-0.25px;">CPU Usage (%)</div>
<div class="t" style="left:930.0px;top:13.30px;font-size:13px;color:#2b2f36;font-weight:bold;width:130px;text-align:center;letter-spacing:-0.25px;">Memory Usage (%)</div>
<div class="t" style="left:1060.0px;top:13.30px;font-size:13px;color:#2b2f36;font-weight:bold;width:130px;text-align:center;letter-spacing:-0.25px;">Disk Usage (%)</div>
<div class="t" style="left:1323.5px;top:13.30px;font-size:13px;color:#2b2f36;font-weight:bold;">Information</div>
<svg class="a" style="left:14.3px;top:51.6px" width="11" height="7"><path d="M0.5 0.5 L10.5 0.5 L5.5 6.2Z" fill="#777c85"/></svg>
<div class="t" style="left:32.5px;top:47.70px;font-size:13px;color:#2b2f36;">None</div>
<div class="a" style="left:0.0px;top:70.0px;width:1400.0px;height:1.0px;background:#d6d9de"></div>
<div class="a" style="left:0.0px;top:100.0px;width:1400.0px;height:1.0px;background:#d6d9de"></div>
<div class="a" style="left:0.0px;top:130.0px;width:1400.0px;height:1.0px;background:#d6d9de"></div>
<div class="a" style="left:0.0px;top:160.0px;width:1400.0px;height:1.0px;background:#d6d9de"></div>
<div class="a" style="left:0.0px;top:190.0px;width:1400.0px;height:1.0px;background:#d6d9de"></div>
<div class="a" style="left:0.0px;top:220.0px;width:1400.0px;height:1.0px;background:#d6d9de"></div>
<div class="a" style="left:0.0px;top:250.0px;width:1400.0px;height:1.0px;background:#d6d9de"></div>
<div class="a" style="left:0.0px;top:280.0px;width:1400.0px;height:1.0px;background:#d6d9de"></div>
<div class="a" style="left:0.0px;top:310.0px;width:1400.0px;height:1.0px;background:#d6d9de"></div>
<div class="a" style="left:0.0px;top:340.0px;width:1400.0px;height:1.0px;background:#d6d9de"></div>
<div class="a" style="left:0.0px;top:370.0px;width:1400.0px;height:1.0px;background:#d6d9de"></div>
<div class="a" style="left:1190px;top:0;width:162px;height:400px;overflow:hidden">
</div>
<div class="t" style="left:34.0px;top:78.60px;font-size:13px;color:#4a78e8;">aidev(10.10.48.36)<svg style="display:inline-block;vertical-align:top;margin-left:5px;margin-top:-1px" width="19" height="15" viewBox="0 0 19 15"><g fill="#3d8ee8"><rect x="4.2" y="5" width="2" height="1.8"/><rect x="6.6" y="5" width="2" height="1.8"/><rect x="9" y="5" width="2" height="1.8"/><rect x="11.4" y="5" width="2" height="1.8"/><rect x="2" y="5" width="2" height="1.8"/><rect x="4.2" y="2.7" width="2" height="1.8"/><rect x="6.6" y="2.7" width="2" height="1.8"/><rect x="9" y="2.7" width="2" height="1.8"/><rect x="9" y="0.4" width="2" height="1.8"/><path d="M0.3 7.4 H14 C14.3 6.6 14.6 5.6 14.8 3.5 C15.5 4.5 15.8 5.5 15.8 6.2 C16.7 6 17.6 6.3 18.3 6.8 C17.6 7.6 16.6 7.9 15.6 7.9 C14.3 11.6 11.2 14 6.8 14 C3 14 0.8 11.5 0.3 7.4Z"/></g></svg><svg style="display:inline-block;vertical-align:top;margin-left:5px;margin-top:0px" width="19" height="12.6" viewBox="0 4.063 24 15.9"><path fill="#76b900" d="M8.948 8.798v-1.43a6.7 6.7 0 0 1 .424-.018c3.922-.124 6.493 3.374 6.493 3.374s-2.774 3.851-5.75 3.851c-.398 0-.787-.062-1.158-.185v-4.346c1.528.185 1.837.857 2.747 2.385l2.04-1.714s-1.492-1.952-4-1.952a6.016 6.016 0 0 0-.796.035m0-4.735v2.138l.424-.027c5.450-.185 9.010 4.470 9.010 4.470s-4.080 4.964-8.330 4.964c-.370 0-.733-.035-1.095-.097v1.325c.300.035.610.062.910.062 3.957 0 6.820-2.023 9.593-4.408.459.371 2.340 1.263 2.730 1.652-2.633 2.208-8.772 3.984-12.253 3.984-.335 0-.653-.018-.971-.053v1.864H24V4.063zm0 10.326v1.131c-3.657-.654-4.673-4.460-4.673-4.460s1.758-1.944 4.673-2.262v1.237H8.940c-1.528-.186-2.730 1.245-2.730 1.245s.680 2.412 2.739 3.110M2.456 10.900s2.164-3.197 6.500-3.533V6.201C4.153 6.590 0 10.653 0 10.653s2.350 6.802 8.948 7.420v-1.237c-4.840-.600-6.492-5.936-6.492-5.936z"/></svg></div>
<div class="a ipb" style="left:509.0px;top:77.0px;height:16px;padding:0 6px;background:#e6e9ec;border-radius:2px;font-size:11px;line-height:15px;color:#3a3f47;white-space:nowrap">10.10.48.36</div>
<div class="a" style="left:615.0px;top:77.0px;width:72.0px;height:16.0px;border:1px solid #e0474a;background:#fdf0f0;border-radius:2px"></div>
<div class="t" style="left:615.0px;top:79.69px;font-size:11px;color:#a82328;width:72px;text-align:center;-webkit-text-stroke:0.3px #a82328;">Critical</div>
<div class="a" style="left:715.0px;top:77.0px;width:72.0px;height:16.0px;border:1px solid #4470e0;background:#eef3fd;border-radius:2px"></div>
<div class="t" style="left:715.0px;top:79.69px;font-size:11px;color:#2540a0;width:72px;text-align:center;-webkit-text-stroke:0.3px #2540a0;">Active</div>
<div class="a" style="left:809.0px;top:78.0px;width:113.0px;height:14.0px;background:#e7e9ec;border-radius:2px"></div>
<div class="a" style="left:809.0px;top:78.0px;width:1.5px;height:14.0px;background:#94bbf6;border-radius:2px 0 0 2px"></div>
<div class="t" style="left:809.0px;top:79.14px;font-size:12px;color:#2b2f36;width:113px;text-align:center;">1.031</div>
<div class="a" style="left:938.7px;top:78.0px;width:113.0px;height:14.0px;background:#e7e9ec;border-radius:2px"></div>
<div class="a" style="left:938.7px;top:78.0px;width:14.6px;height:14.0px;background:#94bbf6;border-radius:2px 0 0 2px"></div>
<div class="t" style="left:938.7px;top:79.14px;font-size:12px;color:#2b2f36;width:113px;text-align:center;">12.894</div>
<div class="a" style="left:1069.0px;top:78.0px;width:113.0px;height:14.0px;background:#e7e9ec;border-radius:2px"></div>
<div class="a" style="left:1069.0px;top:78.0px;width:19.1px;height:14.0px;background:#94bbf6;border-radius:2px 0 0 2px"></div>
<div class="t" style="left:1069.0px;top:79.14px;font-size:12px;color:#2b2f36;width:113px;text-align:center;">16.918</div>
<div class="a" style="left:1199.0px;top:76.5px;width:153px;height:18px;overflow:hidden;white-space:nowrap">
<span style="display:inline-block;height:16px;margin-right:4px;padding:0 6px;background:#e6e9ec;border-radius:2px;font-size:11px;line-height:15px;color:#3a3f47;vertical-align:top">linux</span><span style="display:inline-block;height:16px;margin-right:4px;padding:0 6px;background:#e6e9ec;border-radius:2px;font-size:11px;line-height:15px;color:#3a3f47;vertical-align:top">5.14.0-427.31.1.el9_4.x86_64</span></div>
<div class="t" style="left:34.0px;top:108.60px;font-size:13px;color:#4a78e8;">aix72(10.10.47.33)</div>
<div class="a ipb" style="left:509.0px;top:107.0px;height:16px;padding:0 6px;background:#e6e9ec;border-radius:2px;font-size:11px;line-height:15px;color:#3a3f47;white-space:nowrap">10.10.47.33</div>
<div class="a" style="left:615.0px;top:107.0px;width:72.0px;height:16.0px;border:1px solid #e0474a;background:#fdf0f0;border-radius:2px"></div>
<div class="t" style="left:615.0px;top:109.69px;font-size:11px;color:#a82328;width:72px;text-align:center;-webkit-text-stroke:0.3px #a82328;">Critical</div>
<div class="a" style="left:715.0px;top:107.0px;width:72.0px;height:16.0px;border:1px solid #4470e0;background:#eef3fd;border-radius:2px"></div>
<div class="t" style="left:715.0px;top:109.69px;font-size:11px;color:#2540a0;width:72px;text-align:center;-webkit-text-stroke:0.3px #2540a0;">Active</div>
<div class="a" style="left:809.0px;top:108.0px;width:113.0px;height:14.0px;background:#e7e9ec;border-radius:2px"></div>
<div class="a" style="left:809.0px;top:108.0px;width:47.4px;height:14.0px;background:#94bbf6;border-radius:2px 0 0 2px"></div>
<div class="t" style="left:809.0px;top:109.14px;font-size:12px;color:#2b2f36;width:113px;text-align:center;">41.946</div>
<div class="a" style="left:938.7px;top:108.0px;width:113.0px;height:14.0px;background:#e7e9ec;border-radius:2px"></div>
<div class="a" style="left:938.7px;top:108.0px;width:111.5px;height:14.0px;background:#94bbf6;border-radius:2px"></div>
<div class="t" style="left:938.7px;top:109.14px;font-size:12px;color:#2b2f36;width:113px;text-align:center;">98.682</div>
<div class="a" style="left:1069.0px;top:108.0px;width:113.0px;height:14.0px;background:#e7e9ec;border-radius:2px"></div>
<div class="a" style="left:1069.0px;top:108.0px;width:85.6px;height:14.0px;background:#94bbf6;border-radius:2px 0 0 2px"></div>
<div class="t" style="left:1069.0px;top:109.14px;font-size:12px;color:#2b2f36;width:113px;text-align:center;">75.766</div>
<div class="a" style="left:1199.0px;top:106.5px;width:153px;height:18px;overflow:hidden;white-space:nowrap">
<span style="display:inline-block;height:16px;margin-right:4px;padding:0 6px;background:#e6e9ec;border-radius:2px;font-size:11px;line-height:15px;color:#3a3f47;vertical-align:top">aix</span><span style="display:inline-block;height:16px;margin-right:4px;padding:0 6px;background:#e6e9ec;border-radius:2px;font-size:11px;line-height:15px;color:#3a3f47;vertical-align:top">7.2</span><span style="display:inline-block;height:16px;margin-right:4px;padding:0 6px;background:#e6e9ec;border-radius:2px;font-size:11px;line-height:15px;color:#3a3f47;vertical-align:top">powerpc</span></div>
<div class="t" style="left:34.0px;top:138.60px;font-size:13px;color:#4a78e8;">DESKTOP-CHUP2TR</div>
<div class="a" style="left:615.0px;top:137.0px;width:72.0px;height:16.0px;border:1px solid #38b56e;background:#ecfaf2;border-radius:2px"></div>
<div class="t" style="left:615.0px;top:139.69px;font-size:11px;color:#1d6b40;width:72px;text-align:center;-webkit-text-stroke:0.3px #1d6b40;">Normal</div>
<div class="a" style="left:715.0px;top:137.0px;width:72.0px;height:16.0px;border:1px solid #c3c7cd;background:#f7f8f9;border-radius:2px"></div>
<div class="t" style="left:715.0px;top:139.69px;font-size:11px;color:#2b2f36;width:72px;text-align:center;-webkit-text-stroke:0.3px #2b2f36;">Inactive</div>
<div class="a" style="left:809.0px;top:138.0px;width:113.0px;height:14.0px;background:#e7e9ec;border-radius:2px"></div>
<div class="t" style="left:809.0px;top:139.14px;font-size:12px;color:#2b2f36;width:113px;text-align:center;">0</div>
<div class="a" style="left:938.7px;top:138.0px;width:113.0px;height:14.0px;background:#e7e9ec;border-radius:2px"></div>
<div class="t" style="left:938.7px;top:139.14px;font-size:12px;color:#2b2f36;width:113px;text-align:center;">0</div>
<div class="a" style="left:1069.0px;top:138.0px;width:113.0px;height:14.0px;background:#e7e9ec;border-radius:2px"></div>
<div class="t" style="left:1069.0px;top:139.14px;font-size:12px;color:#2b2f36;width:113px;text-align:center;">0</div>
<div class="a" style="left:1199.0px;top:136.5px;width:153px;height:18px;overflow:hidden;white-space:nowrap">
<span style="display:inline-block;height:16px;margin-right:4px;padding:0 6px;background:#e6e9ec;border-radius:2px;font-size:11px;line-height:15px;color:#3a3f47;vertical-align:top">windows</span><span style="display:inline-block;height:16px;margin-right:4px;padding:0 6px;background:#e6e9ec;border-radius:2px;font-size:11px;line-height:15px;color:#3a3f47;vertical-align:top">10.0.26100.4946</span></div>
<div class="t" style="left:34.0px;top:168.60px;font-size:13px;color:#4a78e8;">DESKTOP-SH(10.20.142.112)</div>
<div class="a ipb" style="left:509.0px;top:167.0px;height:16px;padding:0 6px;background:#e6e9ec;border-radius:2px;font-size:11px;line-height:15px;color:#3a3f47;white-space:nowrap">10.20.142.112</div>
<div class="a" style="left:615.0px;top:167.0px;width:72.0px;height:16.0px;border:1px solid #e0474a;background:#fdf0f0;border-radius:2px"></div>
<div class="t" style="left:615.0px;top:169.69px;font-size:11px;color:#a82328;width:72px;text-align:center;-webkit-text-stroke:0.3px #a82328;">Critical</div>
<div class="a" style="left:715.0px;top:167.0px;width:72.0px;height:16.0px;border:1px solid #4470e0;background:#eef3fd;border-radius:2px"></div>
<div class="t" style="left:715.0px;top:169.69px;font-size:11px;color:#2540a0;width:72px;text-align:center;-webkit-text-stroke:0.3px #2540a0;">Active</div>
<div class="a" style="left:809.0px;top:168.0px;width:113.0px;height:14.0px;background:#e7e9ec;border-radius:2px"></div>
<div class="a" style="left:809.0px;top:168.0px;width:15.0px;height:14.0px;background:#94bbf6;border-radius:2px 0 0 2px"></div>
<div class="t" style="left:809.0px;top:169.14px;font-size:12px;color:#2b2f36;width:113px;text-align:center;">13.269</div>
<div class="a" style="left:938.7px;top:168.0px;width:113.0px;height:14.0px;background:#e7e9ec;border-radius:2px"></div>
<div class="a" style="left:938.7px;top:168.0px;width:92.4px;height:14.0px;background:#94bbf6;border-radius:2px 0 0 2px"></div>
<div class="t" style="left:938.7px;top:169.14px;font-size:12px;color:#2b2f36;width:113px;text-align:center;">81.806</div>
<div class="a" style="left:1069.0px;top:168.0px;width:113.0px;height:14.0px;background:#e7e9ec;border-radius:2px"></div>
<div class="a" style="left:1069.0px;top:168.0px;width:67.2px;height:14.0px;background:#94bbf6;border-radius:2px 0 0 2px"></div>
<div class="t" style="left:1069.0px;top:169.14px;font-size:12px;color:#2b2f36;width:113px;text-align:center;">59.478</div>
<div class="a" style="left:1199.0px;top:166.5px;width:153px;height:18px;overflow:hidden;white-space:nowrap">
<span style="display:inline-block;height:16px;margin-right:4px;padding:0 6px;background:#e6e9ec;border-radius:2px;font-size:11px;line-height:15px;color:#3a3f47;vertical-align:top">windows</span><span style="display:inline-block;height:16px;margin-right:4px;padding:0 6px;background:#e6e9ec;border-radius:2px;font-size:11px;line-height:15px;color:#3a3f47;vertical-align:top">10.0.26100.6899</span></div>
<div class="t" style="left:34.0px;top:198.60px;font-size:13px;color:#4a78e8;">dev-targets(10.10.43.142)<svg style="display:inline-block;vertical-align:top;margin-left:5px;margin-top:-1px" width="19" height="15" viewBox="0 0 19 15"><g fill="#3d8ee8"><rect x="4.2" y="5" width="2" height="1.8"/><rect x="6.6" y="5" width="2" height="1.8"/><rect x="9" y="5" width="2" height="1.8"/><rect x="11.4" y="5" width="2" height="1.8"/><rect x="2" y="5" width="2" height="1.8"/><rect x="4.2" y="2.7" width="2" height="1.8"/><rect x="6.6" y="2.7" width="2" height="1.8"/><rect x="9" y="2.7" width="2" height="1.8"/><rect x="9" y="0.4" width="2" height="1.8"/><path d="M0.3 7.4 H14 C14.3 6.6 14.6 5.6 14.8 3.5 C15.5 4.5 15.8 5.5 15.8 6.2 C16.7 6 17.6 6.3 18.3 6.8 C17.6 7.6 16.6 7.9 15.6 7.9 C14.3 11.6 11.2 14 6.8 14 C3 14 0.8 11.5 0.3 7.4Z"/></g></svg></div>
<div class="a ipb" style="left:509.0px;top:197.0px;height:16px;padding:0 6px;background:#e6e9ec;border-radius:2px;font-size:11px;line-height:15px;color:#3a3f47;white-space:nowrap">10.10.43.142</div>
<div class="a" style="left:615.0px;top:197.0px;width:72.0px;height:16.0px;border:1px solid #e0474a;background:#fdf0f0;border-radius:2px"></div>
<div class="t" style="left:615.0px;top:199.69px;font-size:11px;color:#a82328;width:72px;text-align:center;-webkit-text-stroke:0.3px #a82328;">Critical</div>
<div class="a" style="left:715.0px;top:197.0px;width:72.0px;height:16.0px;border:1px solid #4470e0;background:#eef3fd;border-radius:2px"></div>
<div class="t" style="left:715.0px;top:199.69px;font-size:11px;color:#2540a0;width:72px;text-align:center;-webkit-text-stroke:0.3px #2540a0;">Active</div>
<div class="a" style="left:809.0px;top:198.0px;width:113.0px;height:14.0px;background:#e7e9ec;border-radius:2px"></div>
<div class="a" style="left:809.0px;top:198.0px;width:13.8px;height:14.0px;background:#94bbf6;border-radius:2px 0 0 2px"></div>
<div class="t" style="left:809.0px;top:199.14px;font-size:12px;color:#2b2f36;width:113px;text-align:center;">12.215</div>
<div class="a" style="left:938.7px;top:198.0px;width:113.0px;height:14.0px;background:#e7e9ec;border-radius:2px"></div>
<div class="a" style="left:938.7px;top:198.0px;width:33.3px;height:14.0px;background:#94bbf6;border-radius:2px 0 0 2px"></div>
<div class="t" style="left:938.7px;top:199.14px;font-size:12px;color:#2b2f36;width:113px;text-align:center;">29.493</div>
<div class="a" style="left:1069.0px;top:198.0px;width:113.0px;height:14.0px;background:#e7e9ec;border-radius:2px"></div>
<div class="a" style="left:1069.0px;top:198.0px;width:82.5px;height:14.0px;background:#94bbf6;border-radius:2px 0 0 2px"></div>
<div class="t" style="left:1069.0px;top:199.14px;font-size:12px;color:#2b2f36;width:113px;text-align:center;">72.976</div>
<div class="a" style="left:1199.0px;top:196.5px;width:153px;height:18px;overflow:hidden;white-space:nowrap">
<span style="display:inline-block;height:16px;margin-right:4px;padding:0 6px;background:#e6e9ec;border-radius:2px;font-size:11px;line-height:15px;color:#3a3f47;vertical-align:top">linux</span><span style="display:inline-block;height:16px;margin-right:4px;padding:0 6px;background:#e6e9ec;border-radius:2px;font-size:11px;line-height:15px;color:#3a3f47;vertical-align:top">4.18.0-513.5.1.el8_9.x86_64</span></div>
<div class="t" style="left:34.0px;top:228.60px;font-size:13px;color:#4a78e8;">dev-targets(10.10.43.142)<svg style="display:inline-block;vertical-align:top;margin-left:5px;margin-top:-1px" width="19" height="15" viewBox="0 0 19 15"><g fill="#3d8ee8"><rect x="4.2" y="5" width="2" height="1.8"/><rect x="6.6" y="5" width="2" height="1.8"/><rect x="9" y="5" width="2" height="1.8"/><rect x="11.4" y="5" width="2" height="1.8"/><rect x="2" y="5" width="2" height="1.8"/><rect x="4.2" y="2.7" width="2" height="1.8"/><rect x="6.6" y="2.7" width="2" height="1.8"/><rect x="9" y="2.7" width="2" height="1.8"/><rect x="9" y="0.4" width="2" height="1.8"/><path d="M0.3 7.4 H14 C14.3 6.6 14.6 5.6 14.8 3.5 C15.5 4.5 15.8 5.5 15.8 6.2 C16.7 6 17.6 6.3 18.3 6.8 C17.6 7.6 16.6 7.9 15.6 7.9 C14.3 11.6 11.2 14 6.8 14 C3 14 0.8 11.5 0.3 7.4Z"/></g></svg></div>
<div class="a ipb" style="left:509.0px;top:227.0px;height:16px;padding:0 6px;background:#e6e9ec;border-radius:2px;font-size:11px;line-height:15px;color:#3a3f47;white-space:nowrap">10.10.43.142</div>
<div class="a" style="left:615.0px;top:227.0px;width:72.0px;height:16.0px;border:1px solid #e0474a;background:#fdf0f0;border-radius:2px"></div>
<div class="t" style="left:615.0px;top:229.69px;font-size:11px;color:#a82328;width:72px;text-align:center;-webkit-text-stroke:0.3px #a82328;">Critical</div>
<div class="a" style="left:715.0px;top:227.0px;width:72.0px;height:16.0px;border:1px solid #4470e0;background:#eef3fd;border-radius:2px"></div>
<div class="t" style="left:715.0px;top:229.69px;font-size:11px;color:#2540a0;width:72px;text-align:center;-webkit-text-stroke:0.3px #2540a0;">Active</div>
<div class="a" style="left:809.0px;top:228.0px;width:113.0px;height:14.0px;background:#e7e9ec;border-radius:2px"></div>
<div class="a" style="left:809.0px;top:228.0px;width:18.8px;height:14.0px;background:#94bbf6;border-radius:2px 0 0 2px"></div>
<div class="t" style="left:809.0px;top:229.14px;font-size:12px;color:#2b2f36;width:113px;text-align:center;">16.646</div>
<div class="a" style="left:938.7px;top:228.0px;width:113.0px;height:14.0px;background:#e7e9ec;border-radius:2px"></div>
<div class="a" style="left:938.7px;top:228.0px;width:33.4px;height:14.0px;background:#94bbf6;border-radius:2px 0 0 2px"></div>
<div class="t" style="left:938.7px;top:229.14px;font-size:12px;color:#2b2f36;width:113px;text-align:center;">29.53</div>
<div class="a" style="left:1069.0px;top:228.0px;width:113.0px;height:14.0px;background:#e7e9ec;border-radius:2px"></div>
<div class="a" style="left:1069.0px;top:228.0px;width:71.2px;height:14.0px;background:#94bbf6;border-radius:2px 0 0 2px"></div>
<div class="t" style="left:1069.0px;top:229.14px;font-size:12px;color:#2b2f36;width:113px;text-align:center;">63.036</div>
<div class="a" style="left:1199.0px;top:226.5px;width:153px;height:18px;overflow:hidden;white-space:nowrap">
<span style="display:inline-block;height:16px;margin-right:4px;padding:0 6px;background:#e6e9ec;border-radius:2px;font-size:11px;line-height:15px;color:#3a3f47;vertical-align:top">linux</span><span style="display:inline-block;height:16px;margin-right:4px;padding:0 6px;background:#e6e9ec;border-radius:2px;font-size:11px;line-height:15px;color:#3a3f47;vertical-align:top">4.18.0-513.5.1.el8_9.x86_64</span></div>
<div class="t" style="left:34.0px;top:258.60px;font-size:13px;color:#4a78e8;">dongri</div>
<div class="a" style="left:615.0px;top:257.0px;width:72.0px;height:16.0px;border:1px solid #e0474a;background:#fdf0f0;border-radius:2px"></div>
<div class="t" style="left:615.0px;top:259.69px;font-size:11px;color:#a82328;width:72px;text-align:center;-webkit-text-stroke:0.3px #a82328;">Critical</div>
<div class="a" style="left:715.0px;top:257.0px;width:72.0px;height:16.0px;border:1px solid #c3c7cd;background:#f7f8f9;border-radius:2px"></div>
<div class="t" style="left:715.0px;top:259.69px;font-size:11px;color:#2b2f36;width:72px;text-align:center;-webkit-text-stroke:0.3px #2b2f36;">Inactive</div>
<div class="a" style="left:809.0px;top:258.0px;width:113.0px;height:14.0px;background:#e7e9ec;border-radius:2px"></div>
<div class="t" style="left:809.0px;top:259.14px;font-size:12px;color:#2b2f36;width:113px;text-align:center;">0</div>
<div class="a" style="left:938.7px;top:258.0px;width:113.0px;height:14.0px;background:#e7e9ec;border-radius:2px"></div>
<div class="t" style="left:938.7px;top:259.14px;font-size:12px;color:#2b2f36;width:113px;text-align:center;">0</div>
<div class="a" style="left:1069.0px;top:258.0px;width:113.0px;height:14.0px;background:#e7e9ec;border-radius:2px"></div>
<div class="t" style="left:1069.0px;top:259.14px;font-size:12px;color:#2b2f36;width:113px;text-align:center;">0</div>
<div class="a" style="left:1199.0px;top:256.5px;width:153px;height:18px;overflow:hidden;white-space:nowrap">
<span style="display:inline-block;height:16px;margin-right:4px;padding:0 6px;background:#e6e9ec;border-radius:2px;font-size:11px;line-height:15px;color:#3a3f47;vertical-align:top">windows</span><span style="display:inline-block;height:16px;margin-right:4px;padding:0 6px;background:#e6e9ec;border-radius:2px;font-size:11px;line-height:15px;color:#3a3f47;vertical-align:top">10.0.22631.6060</span></div>
<div class="t" style="left:34.0px;top:288.60px;font-size:13px;color:#4a78e8;">exemone(10.10.48.128)</div>
<div class="a ipb" style="left:509.0px;top:287.0px;height:16px;padding:0 6px;background:#e6e9ec;border-radius:2px;font-size:11px;line-height:15px;color:#3a3f47;white-space:nowrap">10.10.48.128</div>
<div class="a" style="left:615.0px;top:287.0px;width:72.0px;height:16.0px;border:1px solid #e0474a;background:#fdf0f0;border-radius:2px"></div>
<div class="t" style="left:615.0px;top:289.69px;font-size:11px;color:#a82328;width:72px;text-align:center;-webkit-text-stroke:0.3px #a82328;">Critical</div>
<div class="a" style="left:715.0px;top:287.0px;width:72.0px;height:16.0px;border:1px solid #4470e0;background:#eef3fd;border-radius:2px"></div>
<div class="t" style="left:715.0px;top:289.69px;font-size:11px;color:#2540a0;width:72px;text-align:center;-webkit-text-stroke:0.3px #2540a0;">Active</div>
<div class="a" style="left:809.0px;top:288.0px;width:113.0px;height:14.0px;background:#e7e9ec;border-radius:2px"></div>
<div class="a" style="left:809.0px;top:288.0px;width:2.6px;height:14.0px;background:#94bbf6;border-radius:2px 0 0 2px"></div>
<div class="t" style="left:809.0px;top:289.14px;font-size:12px;color:#2b2f36;width:113px;text-align:center;">2.287</div>
<div class="a" style="left:938.7px;top:288.0px;width:113.0px;height:14.0px;background:#e7e9ec;border-radius:2px"></div>
<div class="a" style="left:938.7px;top:288.0px;width:71.3px;height:14.0px;background:#94bbf6;border-radius:2px 0 0 2px"></div>
<div class="t" style="left:938.7px;top:289.14px;font-size:12px;color:#2b2f36;width:113px;text-align:center;">63.104</div>
<div class="a" style="left:1069.0px;top:288.0px;width:113.0px;height:14.0px;background:#e7e9ec;border-radius:2px"></div>
<div class="a" style="left:1069.0px;top:288.0px;width:35.6px;height:14.0px;background:#94bbf6;border-radius:2px 0 0 2px"></div>
<div class="t" style="left:1069.0px;top:289.14px;font-size:12px;color:#2b2f36;width:113px;text-align:center;">31.507</div>
<div class="a" style="left:1199.0px;top:286.5px;width:153px;height:18px;overflow:hidden;white-space:nowrap">
<span style="display:inline-block;height:16px;margin-right:4px;padding:0 6px;background:#e6e9ec;border-radius:2px;font-size:11px;line-height:15px;color:#3a3f47;vertical-align:top">linux</span><span style="display:inline-block;height:16px;margin-right:4px;padding:0 6px;background:#e6e9ec;border-radius:2px;font-size:11px;line-height:15px;color:#3a3f47;vertical-align:top">5.14.0-570.26.1.el9_6.x86_64</span></div>
<div class="t" style="left:34.0px;top:318.60px;font-size:13px;color:#4a78e8;">hostTopology-1(10.10.38.220)</div>
<div class="a ipb" style="left:509.0px;top:317.0px;height:16px;padding:0 6px;background:#e6e9ec;border-radius:2px;font-size:11px;line-height:15px;color:#3a3f47;white-space:nowrap">10.10.38.220</div>
<div class="a" style="left:615.0px;top:317.0px;width:72.0px;height:16.0px;border:1px solid #e0474a;background:#fdf0f0;border-radius:2px"></div>
<div class="t" style="left:615.0px;top:319.69px;font-size:11px;color:#a82328;width:72px;text-align:center;-webkit-text-stroke:0.3px #a82328;">Critical</div>
<div class="a" style="left:715.0px;top:317.0px;width:72.0px;height:16.0px;border:1px solid #4470e0;background:#eef3fd;border-radius:2px"></div>
<div class="t" style="left:715.0px;top:319.69px;font-size:11px;color:#2540a0;width:72px;text-align:center;-webkit-text-stroke:0.3px #2540a0;">Active</div>
<div class="a" style="left:809.0px;top:318.0px;width:113.0px;height:14.0px;background:#e7e9ec;border-radius:2px"></div>
<div class="a" style="left:809.0px;top:318.0px;width:1.9px;height:14.0px;background:#94bbf6;border-radius:2px 0 0 2px"></div>
<div class="t" style="left:809.0px;top:319.14px;font-size:12px;color:#2b2f36;width:113px;text-align:center;">1.71</div>
<div class="a" style="left:938.7px;top:318.0px;width:113.0px;height:14.0px;background:#e7e9ec;border-radius:2px"></div>
<div class="a" style="left:938.7px;top:318.0px;width:97.4px;height:14.0px;background:#94bbf6;border-radius:2px 0 0 2px"></div>
<div class="t" style="left:938.7px;top:319.14px;font-size:12px;color:#2b2f36;width:113px;text-align:center;">86.171</div>
<div class="a" style="left:1069.0px;top:318.0px;width:113.0px;height:14.0px;background:#e7e9ec;border-radius:2px"></div>
<div class="a" style="left:1069.0px;top:318.0px;width:50.6px;height:14.0px;background:#94bbf6;border-radius:2px 0 0 2px"></div>
<div class="t" style="left:1069.0px;top:319.14px;font-size:12px;color:#2b2f36;width:113px;text-align:center;">44.796</div>
<div class="a" style="left:1199.0px;top:316.5px;width:153px;height:18px;overflow:hidden;white-space:nowrap">
<span style="display:inline-block;height:16px;margin-right:4px;padding:0 6px;background:#e6e9ec;border-radius:2px;font-size:11px;line-height:15px;color:#3a3f47;vertical-align:top">linux</span><span style="display:inline-block;height:16px;margin-right:4px;padding:0 6px;background:#e6e9ec;border-radius:2px;font-size:11px;line-height:15px;color:#3a3f47;vertical-align:top">5.14.0-162.6.1.el9_1.x86_64</span></div>
<div class="t" style="left:34.0px;top:348.60px;font-size:13px;color:#4a78e8;">hyo</div>
<div class="a" style="left:615.0px;top:347.0px;width:72.0px;height:16.0px;border:1px solid #38b56e;background:#ecfaf2;border-radius:2px"></div>
<div class="t" style="left:615.0px;top:349.69px;font-size:11px;color:#1d6b40;width:72px;text-align:center;-webkit-text-stroke:0.3px #1d6b40;">Normal</div>
<div class="a" style="left:715.0px;top:347.0px;width:72.0px;height:16.0px;border:1px solid #c3c7cd;background:#f7f8f9;border-radius:2px"></div>
<div class="t" style="left:715.0px;top:349.69px;font-size:11px;color:#2b2f36;width:72px;text-align:center;-webkit-text-stroke:0.3px #2b2f36;">Inactive</div>
<div class="a" style="left:809.0px;top:348.0px;width:113.0px;height:14.0px;background:#e7e9ec;border-radius:2px"></div>
<div class="t" style="left:809.0px;top:349.14px;font-size:12px;color:#2b2f36;width:113px;text-align:center;">0</div>
<div class="a" style="left:938.7px;top:348.0px;width:113.0px;height:14.0px;background:#e7e9ec;border-radius:2px"></div>
<div class="t" style="left:938.7px;top:349.14px;font-size:12px;color:#2b2f36;width:113px;text-align:center;">0</div>
<div class="a" style="left:1069.0px;top:348.0px;width:113.0px;height:14.0px;background:#e7e9ec;border-radius:2px"></div>
<div class="t" style="left:1069.0px;top:349.14px;font-size:12px;color:#2b2f36;width:113px;text-align:center;">0</div>
<div class="a" style="left:1199.0px;top:346.5px;width:153px;height:18px;overflow:hidden;white-space:nowrap">
<span style="display:inline-block;height:16px;margin-right:4px;padding:0 6px;background:#e6e9ec;border-radius:2px;font-size:11px;line-height:15px;color:#3a3f47;vertical-align:top">linux</span><span style="display:inline-block;height:16px;margin-right:4px;padding:0 6px;background:#e6e9ec;border-radius:2px;font-size:11px;line-height:15px;color:#3a3f47;vertical-align:top">5.14.0-284.11.1.el9_2.x86_64</span></div>
<div class="t" style="left:34.0px;top:378.60px;font-size:13px;color:#4a78e8;">jw-sandbox<svg style="display:inline-block;vertical-align:top;margin-left:5px;margin-top:-1px" width="19" height="15" viewBox="0 0 19 15"><g fill="#3d8ee8"><rect x="4.2" y="5" width="2" height="1.8"/><rect x="6.6" y="5" width="2" height="1.8"/><rect x="9" y="5" width="2" height="1.8"/><rect x="11.4" y="5" width="2" height="1.8"/><rect x="2" y="5" width="2" height="1.8"/><rect x="4.2" y="2.7" width="2" height="1.8"/><rect x="6.6" y="2.7" width="2" height="1.8"/><rect x="9" y="2.7" width="2" height="1.8"/><rect x="9" y="0.4" width="2" height="1.8"/><path d="M0.3 7.4 H14 C14.3 6.6 14.6 5.6 14.8 3.5 C15.5 4.5 15.8 5.5 15.8 6.2 C16.7 6 17.6 6.3 18.3 6.8 C17.6 7.6 16.6 7.9 15.6 7.9 C14.3 11.6 11.2 14 6.8 14 C3 14 0.8 11.5 0.3 7.4Z"/></g></svg></div>
<div class="a" style="left:615.0px;top:377.0px;width:72.0px;height:16.0px;border:1px solid #38b56e;background:#ecfaf2;border-radius:2px"></div>
<div class="t" style="left:615.0px;top:379.69px;font-size:11px;color:#1d6b40;width:72px;text-align:center;-webkit-text-stroke:0.3px #1d6b40;">Normal</div>
<div class="a" style="left:715.0px;top:377.0px;width:72.0px;height:16.0px;border:1px solid #c3c7cd;background:#f7f8f9;border-radius:2px"></div>
<div class="t" style="left:715.0px;top:379.69px;font-size:11px;color:#2b2f36;width:72px;text-align:center;-webkit-text-stroke:0.3px #2b2f36;">Inactive</div>
<div class="a" style="left:809.0px;top:378.0px;width:113.0px;height:14.0px;background:#e7e9ec;border-radius:2px"></div>
<div class="t" style="left:809.0px;top:379.14px;font-size:12px;color:#2b2f36;width:113px;text-align:center;">0</div>
<div class="a" style="left:938.7px;top:378.0px;width:113.0px;height:14.0px;background:#e7e9ec;border-radius:2px"></div>
<div class="t" style="left:938.7px;top:379.14px;font-size:12px;color:#2b2f36;width:113px;text-align:center;">0</div>
<div class="a" style="left:1069.0px;top:378.0px;width:113.0px;height:14.0px;background:#e7e9ec;border-radius:2px"></div>
<div class="t" style="left:1069.0px;top:379.14px;font-size:12px;color:#2b2f36;width:113px;text-align:center;">0</div>
<div class="a" style="left:1199.0px;top:376.5px;width:153px;height:18px;overflow:hidden;white-space:nowrap">
<span style="display:inline-block;height:16px;margin-right:4px;padding:0 6px;background:#e6e9ec;border-radius:2px;font-size:11px;line-height:15px;color:#3a3f47;vertical-align:top">linux</span><span style="display:inline-block;height:16px;margin-right:4px;padding:0 6px;background:#e6e9ec;border-radius:2px;font-size:11px;line-height:15px;color:#3a3f47;vertical-align:top">4.18.0-553.33.1.el8_10.x86_64</span></div>
<div class="a" style="left:1352.0px;top:0.0px;width:6.0px;height:393.0px;background:#f0f2f4"></div>
<div class="a" style="left:1352.0px;top:0.0px;width:6.0px;height:179.0px;background:#d3d6da"></div>
<div class="a" style="left:0.0px;top:393.0px;width:1352.0px;height:6.0px;background:#eef0f2"></div>
<div class="a" style="left:0.0px;top:393.0px;width:971.0px;height:6.0px;background:#d3d6da"></div>
</div></body></html>
